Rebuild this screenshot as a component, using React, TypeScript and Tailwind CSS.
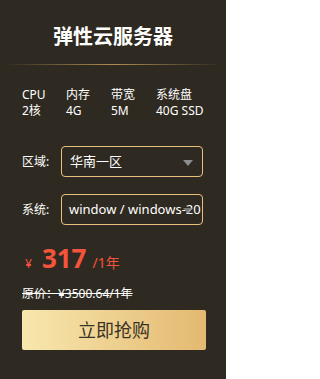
export default function App() {
  return (
    <div
      className="h-[379px] w-[226px] bg-[#2f2a21] text-white"
      style={{ fontFamily: '"Noto Sans", "Noto Sans CJK SC", sans-serif' }}
    >
      <div className="flex h-[64px] items-center justify-center pt-[10px]">
        <h1 className="text-[20px] font-bold leading-none">弹性云服务器</h1>
      </div>
      <div className="mx-[5px] h-px bg-gradient-to-r from-transparent via-[#b08d52] to-transparent" />

      <div className="mt-[22px] grid grid-cols-[44px_45px_45px_1fr] pl-[22px] text-[12px] leading-[16px]">
        <span>CPU</span>
        <span>内存</span>
        <span>带宽</span>
        <span>系统盘</span>
        <span>2核</span>
        <span>4G</span>
        <span>5M</span>
        <span>40G SSD</span>
      </div>

      <div className="mt-[27px] flex items-center pl-[22px] pr-[23px]">
        <span className="w-[39px] text-[12px]">区域:</span>
        <div className="relative flex h-[31px] flex-1 items-center rounded-[4px] border border-[#e8bf7c] pl-[8px] text-[13px]">
          <span>华南一区</span>
          <span className="absolute right-[9px] top-[13px] h-0 w-0 border-x-[5px] border-t-[6px] border-x-transparent border-t-[#8d8d8d]" />
        </div>
      </div>

      <div className="mt-[17px] flex items-center pl-[22px] pr-[23px]">
        <span className="w-[39px] text-[12px]">系统:</span>
        <div className="relative flex h-[31px] flex-1 items-center rounded-[4px] border border-[#e8bf7c] pl-[7px] text-[13px]">
          <span className="whitespace-nowrap">window / windows-20</span>
          <span className="absolute right-[9px] top-[13px] h-0 w-0 border-x-[5px] border-t-[6px] border-x-transparent border-t-[#8d8d8d]/80" />
        </div>
      </div>

      <div className="mt-[19px] flex items-baseline pl-[25px] text-[#f4543c]">
        <span className="text-[12px]">¥</span>
        <span className="ml-[10px] text-[26px] font-bold leading-[28px]">317</span>
        <span className="ml-[6px] text-[14px]">/1年</span>
      </div>

      <div className="mt-[13px] pl-[22px] text-[12px] leading-[16px]">
        <span className="line-through">原价：¥3500.64/1年</span>
      </div>

      <button className="ml-[22px] mt-[8px] flex h-[40px] w-[184px] items-center justify-center rounded-[2px] bg-gradient-to-r from-[#f8e7ae] to-[#e3b970] text-[18px] text-[#3a3226]">
        立即抢购
      </button>
    </div>
  );
}
